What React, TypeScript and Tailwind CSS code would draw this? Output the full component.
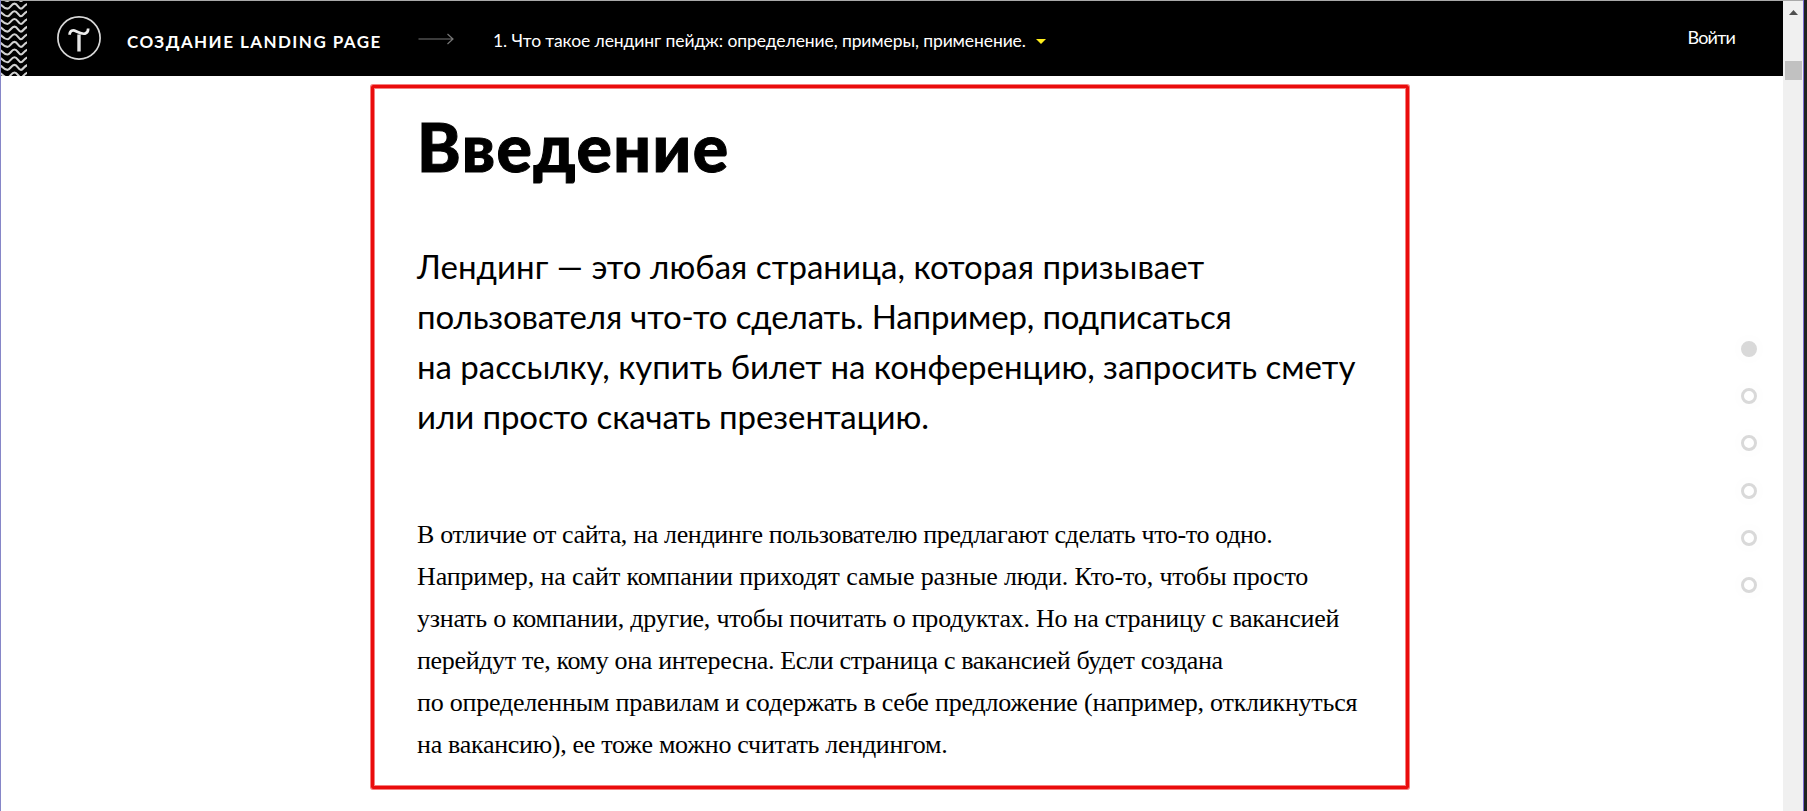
const lead = [
  { text: "Лендинг — это любая страница, которая призывает", spacing: "tracking-[0.04px]" },
  { text: "пользователя что-то сделать. Например, подписаться", spacing: "tracking-[-0.15px]" },
  { text: "на рассылку, купить билет на конференцию, запросить смету", spacing: "tracking-[-0.02px]" },
  { text: "или просто скачать презентацию.", spacing: "tracking-[-0.08px]" },
];

const body = [
  { text: "В отличие от сайта, на лендинге пользователю предлагают сделать что-то одно.", spacing: "tracking-[-0.352px]" },
  { text: "Например, на сайт компании приходят самые разные люди. Кто-то, чтобы просто", spacing: "tracking-[-0.135px]" },
  { text: "узнать о компании, другие, чтобы почитать о продуктах. Но на страницу с вакансией", spacing: "tracking-[-0.235px]" },
  { text: "перейдут те, кому она интересна. Если страница с вакансией будет создана", spacing: "tracking-[-0.34px]" },
  { text: "по определенным правилам и содержать в себе предложение (например, откликнуться", spacing: "tracking-[-0.224px]" },
  { text: "на вакансию), ее тоже можно считать лендингом.", spacing: "tracking-[-0.289px]" },
];

function Waves() {
  return (
    <svg className="h-[75px] w-[26px] shrink-0" viewBox="0 0 26 75" fill="none" stroke="#d2d2d2" strokeWidth="2.1">
      {Array.from({ length: 12 }, (_, i) => (
        <path
          key={i}
          d="M-5 0C-2 0 -1 0 1 2S4 5 6.5 5S10.5 0 13.5 0S17.5 5 20 5S23 0 28 0"
          transform={`translate(0 ${i * 7.65 - 5})`}
        />
      ))}
    </svg>
  );
}

function Logo() {
  return (
    <svg className="h-11 w-11 shrink-0" viewBox="0 0 44 44" fill="none">
      <circle cx="22" cy="22" r="21.1" stroke="#d8d8d8" strokeWidth="1.7" />
      <path d="M12.6 18.8C12.8 14.6 15.8 13.6 19 15.2S25.5 18.2 28 17.6S31.2 15.5 31.2 12.6" stroke="#ececec" strokeWidth="2.7" />
      <path d="M22 18.5V35.5" stroke="#e4e4e4" strokeWidth="3.4" />
    </svg>
  );
}

function Header() {
  return (
    <header className="flex h-[76px] shrink-0 border-t border-[#a9a9a9] bg-black font-['Lato',sans-serif] text-white">
      <Waves />
      <div className="flex flex-1 items-start pl-[30px]">
        <div className="pt-[15px]"><Logo /></div>
        <span className="mt-[31px] ml-[26px] w-[291px] whitespace-nowrap text-[17px] leading-[20px] font-bold tracking-[1.44px]">
          СОЗДАНИЕ LANDING PAGE
        </span>
        <svg className="mt-8 h-3 w-9 shrink-0" viewBox="0 0 36 12" fill="none" stroke="#777" strokeWidth="1.2">
          <path d="M0.5 6H35M29.5 1L35 6L29.5 11" />
        </svg>
        <span className="mt-[30px] ml-[39px] whitespace-nowrap text-[17.5px] leading-[20px] tracking-[-0.1px]">
          1. Что такое лендинг пейдж: определение, примеры, применение.
        </span>
        <svg className="mt-[38px] ml-[10px] h-[5px] w-[10px] shrink-0" viewBox="0 0 10 5">
          <path d="M0 0H10L5 5Z" fill="#ffee1c" />
        </svg>
        <span className="mt-[26px] mr-[48px] ml-auto text-[18px] leading-[20px] tracking-[-0.8px]">Войти</span>
      </div>
    </header>
  );
}

export default function App() {
  return (
    <div className="flex h-[811px] w-[1807px] overflow-hidden border-l border-[#8686c8] bg-white text-black">
      <div className="flex w-[1782px] flex-col">
        <Header />
        <div className="flex flex-1">
          <main className="mt-[9px] ml-[370px] h-[704px] w-[1038px] rounded-[2px] border-[3px] border-[#ea0c0c] pt-[19px] pl-[43px] shadow-[0_0_0_1px_#f58080,inset_0_0_0_1px_#f58080]">
            <h1 className="h-20 font-['Lato',sans-serif] text-[66px] leading-[80px] font-black tracking-[1.5px] [-webkit-text-stroke:1px_black]">
              Введение
            </h1>
            <p className="mt-[54px] font-['Lato',sans-serif] text-[33px] leading-[50px]">
              {lead.map((l) => (
                <span key={l.text} className={`block whitespace-nowrap ${l.spacing}`}>{l.text}</span>
              ))}
            </p>
            <p className="mt-[73px] font-['Liberation_Serif',serif] text-[26px] leading-[42px]">
              {body.map((l) => (
                <span key={l.text} className={`block whitespace-nowrap ${l.spacing}`}>{l.text}</span>
              ))}
            </p>
          </main>
          <nav className="mt-[265px] mr-[26px] ml-auto flex h-[252px] w-4 shrink-0 flex-col justify-between">
            {[0, 1, 2, 3, 4, 5].map((i) => (
              <span
                key={i}
                className={`h-4 w-4 rounded-full border-[3px] border-[#d9d9d9] shadow-[0_0_20px_rgba(0,0,0,0.03)] ${i === 0 ? "bg-[#d9d9d9]" : "bg-white"}`}
              />
            ))}
          </nav>
        </div>
      </div>
      <aside className="flex w-5 shrink-0 flex-col items-center border-t border-[#a9a9a9] bg-[#f0f0f0]">
        <svg className="mt-[9px] h-[5px] w-[9px]" viewBox="0 0 9 5">
          <path d="M4.5 0L9 5H0Z" fill="#505050" />
        </svg>
        <div className="mt-[46px] h-[19px] w-[17px] bg-[#c1c1c1]" />
      </aside>
      <div className="w-1 shrink-0 grow border-l border-[#7a6bd0] bg-[#1e211f]" />
    </div>
  );
}
